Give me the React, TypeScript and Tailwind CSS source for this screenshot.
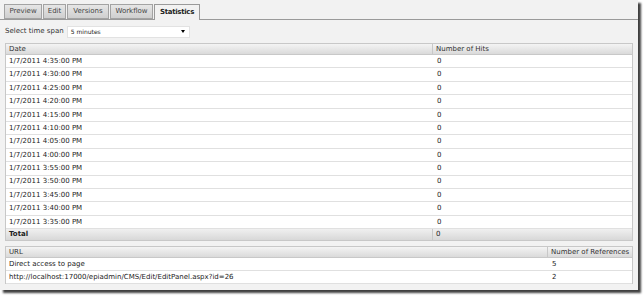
const hits = [
  "4:35:00", "4:30:00", "4:25:00", "4:20:00", "4:15:00", "4:10:00", "4:05:00",
  "4:00:00", "3:55:00", "3:50:00", "3:45:00", "3:40:00", "3:35:00",
];

const refs = [
  { url: "Direct access to page", count: 5 },
  { url: "http://localhost:17000/epiadmin/CMS/Edit/EditPanel.aspx?id=26", count: 2 },
];

const tabs = [
  { label: "Preview", w: "w-[38px]" },
  { label: "Edit", w: "w-[23px]" },
  { label: "Versions", w: "w-[42px]" },
  { label: "Workflow", w: "w-[43px]" },
  { label: "Statistics", w: "w-[46px]" },
];

function Tab({ label, w, active }: { label: string; w: string; active?: boolean }) {
  return (
    <div
      className={
        active
          ? `${w} h-[16px] flex items-center justify-center border border-b-0 border-[#9a9a9a] bg-[#f2f2f2] font-bold tracking-[-0.3px] text-[#222] -mb-px relative z-10 whitespace-nowrap`
          : `${w} h-[15px] flex items-center justify-center border border-[#a3a3a3] bg-gradient-to-b from-[#e6e6e6] to-[#cfcfcf] text-[#444] whitespace-nowrap`
      }
    >
      {label}
    </div>
  );
}

function HeadRow({ left, right, split }: { left: string; right: string; split: string }) {
  return (
    <div className="flex h-[11px] items-center bg-gradient-to-b from-[#f4f4f4] to-[#dadada] border-b border-[#c8c8c8] text-[#333]">
      <div className={`${split} pl-[3px] h-full flex items-center border-r border-[#c8c8c8]`}>{left}</div>
      <div className="flex-1 pl-[3px]">{right}</div>
    </div>
  );
}

export default function App() {
  return (
    <div className="w-[644px] h-[296px] bg-white overflow-hidden" style={{ fontFamily: '"DejaVu Sans", sans-serif' }}>
      <div className="w-[638px] h-[290px] bg-[#f2f2f2] shadow-[3px_3px_2px_rgba(0,0,0,0.75)] text-[7px] text-[#222] pt-[4px]">
        <div className="flex items-end gap-[1px] pl-[4px] border-b border-[#9a9a9a] h-[16px]">
          {tabs.map((t) => (
            <Tab key={t.label} label={t.label} w={t.w} active={t.label === "Statistics"} />
          ))}
        </div>

        <div className="flex items-center gap-[3px] pl-[5px] mt-[5px] h-[13px]">
          <span className="text-[#333]">Select time span</span>
          <div className="w-[123px] h-[12px] bg-white border border-[#e2e2e2] flex items-center justify-between pl-[3px] pr-[4px] text-[6px]">
            <span>5 minutes</span>
            <span className="w-0 h-0 border-l-[2.5px] border-r-[2.5px] border-t-[3px] border-l-transparent border-r-transparent border-t-black" />
          </div>
        </div>

        <div className="mx-[5px] mt-[5px] border-l border-r border-t border-[#c8c8c8] bg-white">
          <HeadRow left="Date" right="Number of Hits" split="w-[427px]" />
          {hits.map((h) => (
            <div key={h} className="flex h-[13.4px] items-center border-b border-[#e0e0e0]">
              <div className="w-[427px] pl-[3px]">1/7/2011 {h} PM</div>
              <div className="flex-1 pl-[4px]">0</div>
            </div>
          ))}
          <div className="flex h-[12px] items-center bg-gradient-to-b from-[#f0f0f0] to-[#d8d8d8] border-b border-[#c8c8c8] font-bold">
            <div className="w-[427px] pl-[3px] h-full flex items-center border-r border-[#c8c8c8]">Total</div>
            <div className="flex-1 pl-[3px] font-normal">0</div>
          </div>
        </div>

        <div className="mx-[5px] mt-[5px] border-l border-r border-t border-[#c8c8c8] bg-white">
          <HeadRow left="URL" right="Number of References" split="w-[542px]" />
          {refs.map((r) => (
            <div key={r.url} className="flex h-[13px] items-center border-b border-[#e0e0e0]">
              <div className="w-[542px] pl-[3px]">{r.url}</div>
              <div className="flex-1 pl-[4px]">{r.count}</div>
            </div>
          ))}
        </div>
      </div>
    </div>
  );
}
